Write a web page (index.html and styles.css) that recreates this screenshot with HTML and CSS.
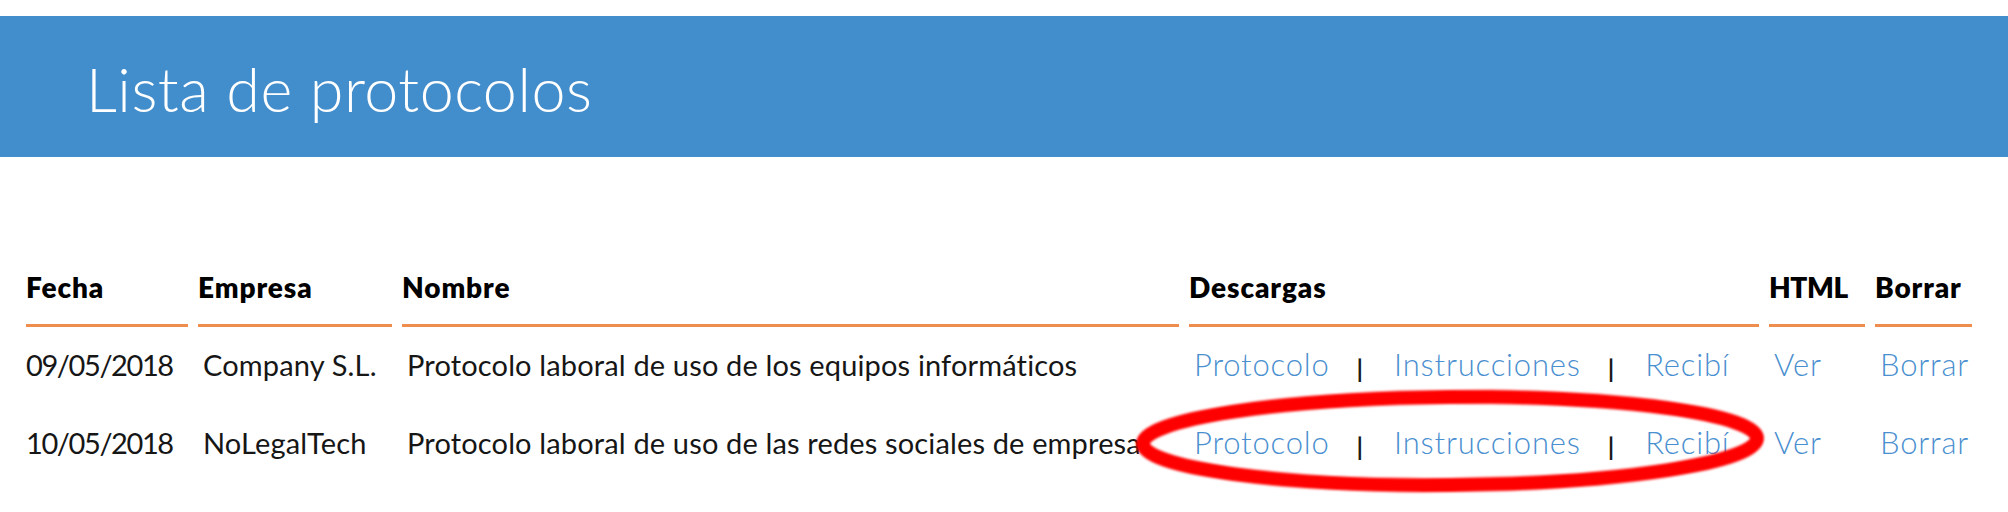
FILE: index.html
```html
<!DOCTYPE html>
<html lang="es">
<head>
<meta charset="utf-8">
<title>Lista de protocolos</title>
<link rel="stylesheet" href="styles.css">
</head>
<body>
<div class="page">
  <header class="banner">
    <h1 class="banner-title">Lista de protocolos</h1>
  </header>
  <main class="content">
    <table class="protocols">
      <colgroup>
        <col class="col-fecha">
        <col class="col-empresa">
        <col class="col-nombre">
        <col class="col-descargas">
        <col class="col-html">
        <col class="col-borrar">
      </colgroup>
      <thead>
        <tr>
          <th>Fecha</th>
          <th>Empresa</th>
          <th>Nombre</th>
          <th>Descargas</th>
          <th class="th-tight">HTML</th>
          <th>Borrar</th>
        </tr>
      </thead>
      <tbody>
        <tr>
          <td class="cell-date">09/05/2018</td>
          <td>Company S.L.</td>
          <td>Protocolo laboral de uso de los equipos informáticos</td>
          <td>
            <div class="downloads">
              <a href="#" class="link">Protocolo</a>
              <span class="sep">|</span>
              <a href="#" class="link">Instrucciones</a>
              <span class="sep">|</span>
              <a href="#" class="link">Recibí</a>
            </div>
          </td>
          <td><a href="#" class="link">Ver</a></td>
          <td><a href="#" class="link">Borrar</a></td>
        </tr>
        <tr>
          <td class="cell-date">10/05/2018</td>
          <td>NoLegalTech</td>
          <td>Protocolo laboral de uso de las redes sociales de empresa</td>
          <td>
            <div class="downloads">
              <a href="#" class="link">Protocolo</a>
              <span class="sep">|</span>
              <a href="#" class="link">Instrucciones</a>
              <span class="sep">|</span>
              <a href="#" class="link">Recibí</a>
            </div>
          </td>
          <td><a href="#" class="link">Ver</a></td>
          <td><a href="#" class="link">Borrar</a></td>
        </tr>
      </tbody>
    </table>
  </main>
  <svg class="annotation" width="660" height="130" viewBox="0 0 660 130" aria-hidden="true">
    <defs>
      <filter id="soft" x="-5%" y="-20%" width="110%" height="140%">
        <feGaussianBlur stdDeviation="1.2"/>
      </filter>
    </defs>
    <ellipse cx="322" cy="64" rx="307" ry="44" fill="none" stroke="#ff0000" stroke-width="14" filter="url(#soft)" transform="rotate(-0.5 322 64)"/>
  </svg>
</div>
</body>
</html>
```

FILE: styles.css
```css
html, body {
  margin: 0;
  padding: 0;
  background: #ffffff;
}

body {
  font-family: "Lato", "Liberation Sans", sans-serif;
  color: #161616;
}

.page {
  position: relative;
  width: 2008px;
  height: 512px;
  padding-top: 16px;
  box-sizing: border-box;
  overflow: hidden;
}

.banner {
  background: #428dcb;
  height: 141px;
  padding: 36px 0 0 86px;
  box-sizing: border-box;
}

.banner-title {
  margin: 0;
  font-family: "Lato", "Liberation Sans", sans-serif;
  font-weight: 300;
  font-size: 61px;
  line-height: 73px;
  letter-spacing: 0.5px;
  color: #ffffff;
}

.content {
  padding: 110px 0 0 16px;
}

.protocols {
  border-collapse: separate;
  border-spacing: 10px 0;
  table-layout: fixed;
  width: 1966px;
  font-size: 28px;
}

.col-fecha { width: 162px; }
.col-empresa { width: 194px; }
.col-nombre { width: 777px; }
.col-descargas { width: 570px; }
.col-html { width: 96px; }
.col-borrar { width: 97px; }

.protocols th {
  text-align: left;
  font-weight: 800;
  letter-spacing: 0.9px;
  color: #000000;
  line-height: 40px;
  padding: 0 0 17px 0;
  border-bottom: 3px solid #ee8d4e;
}

.protocols th.th-tight {
  letter-spacing: -0.4px;
}

.protocols td {
  font-size: 29px;
  line-height: 40px;
  height: 40px;
  padding: 18px 0 20px 5px;
  white-space: nowrap;
  letter-spacing: 0.15px;
  vertical-align: top;
}

.protocols td.cell-date {
  padding-left: 0;
  letter-spacing: -1.4px;
}

.downloads {
  display: flex;
  align-items: baseline;
  height: 40px;
}

.link {
  color: #4a8fd0;
  font-size: 31px;
  line-height: 38px;
  font-weight: 300;
  letter-spacing: 0.8px;
  text-decoration: none;
}

.sep {
  margin: 0 31px 0 27px;
  font-size: 25px;
  line-height: 24px;
  font-weight: 700;
  letter-spacing: 0;
  color: #1a1a1a;
  transform: translateY(2px);
}

.annotation {
  position: absolute;
  left: 1128px;
  top: 377px;
  pointer-events: none;
}
```
